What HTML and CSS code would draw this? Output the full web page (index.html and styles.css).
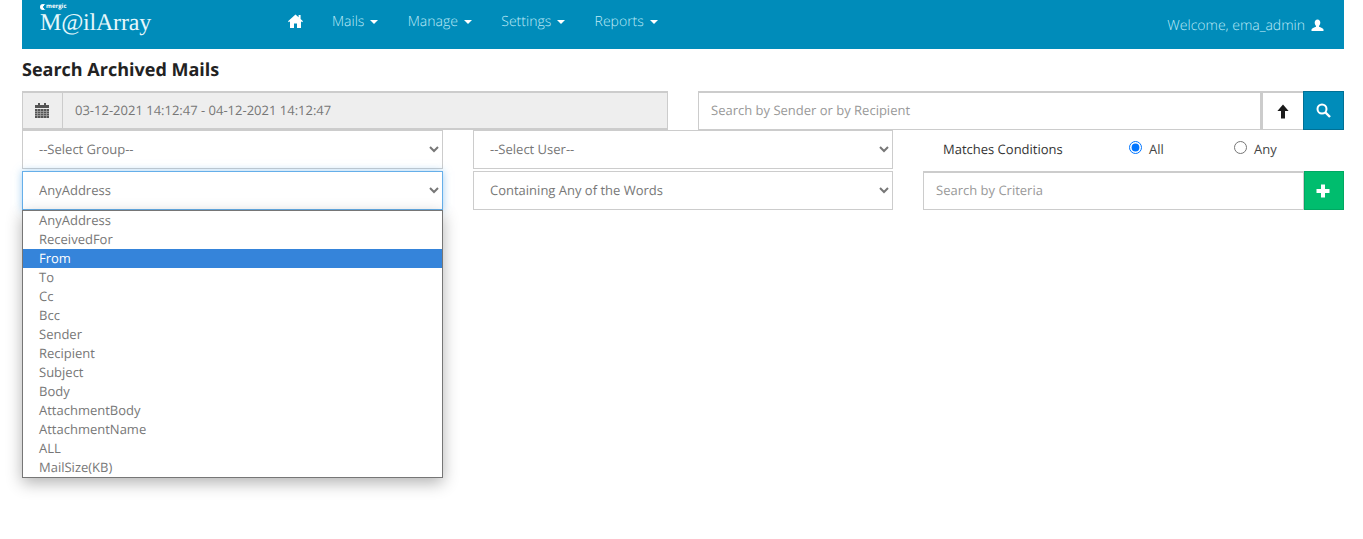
FILE: index.html
```html
<!DOCTYPE html>
<html lang="en">
<head>
<meta charset="utf-8">
<title>Search Archived Mails</title>
<link rel="stylesheet" href="styles.css">
</head>
<body>
<div class="page">
  <nav class="navbar">
    <div class="brand">
      <div class="brand-top"><span class="brand-dot"></span>mergic</div>
      <div class="brand-name">M@ilArray</div>
    </div>
    <ul class="menu">
      <li class="home"><svg width="15" height="14" viewBox="0 0 15 14"><path fill="#fff" d="M7.5 0.5 L0 7.3 L0.9 8.2 L2 7.3 V14 H6 V9.5 H9 V14 H13 V7.3 L14.1 8.2 L15 7.3 L12.6 5.1 V1 H10.6 V3.3 Z"/></svg></li>
      <li class="item">Mails<span class="caret"></span></li>
      <li class="item">Manage<span class="caret"></span></li>
      <li class="item">Settings<span class="caret"></span></li>
      <li class="item">Reports<span class="caret"></span></li>
    </ul>
    <div class="welcome">Welcome, ema_admin<svg class="user" width="13" height="13" viewBox="0 0 13 13"><path fill="#fff" d="M6.5 0.5 C4.7 0.5 3.7 1.9 3.7 3.6 C3.7 5 4.3 6.2 5 6.9 V7.7 C3.4 8.4 0.5 9.2 0.5 10.6 V12 H12.5 V10.6 C12.5 9.2 9.6 8.4 8 7.7 V6.9 C8.7 6.2 9.3 5 9.3 3.6 C9.3 1.9 8.3 0.5 6.5 0.5 Z"/></svg></div>
  </nav>
  <h1 class="title">Search Archived Mails</h1>
  <div class="row row-first">
    <div class="date-group">
      <span class="cal"><svg width="14" height="15" viewBox="0 0 14 15"><path fill="#555" d="M3 0 H5 V2 H9 V0 H11 V2 H14 V5 H0 V2 H3 Z M0 6 H14 V15 H0 Z"/><path stroke="#aaa" stroke-width="0.7" fill="none" d="M0 8.5 H14 M0 10.5 H14 M0 12.5 H14 M2.5 6 V15 M5.5 6 V15 M8.5 6 V15 M11.5 6 V15"/></svg></span>
      <input class="date-input" type="text" value="03-12-2021 14:12:47 - 04-12-2021 14:12:47" readonly>
    </div>
    <div class="search-group">
      <input class="search-input" type="text" placeholder="Search by Sender or by Recipient">
      <button class="btn-up" type="button"><svg width="12" height="15" viewBox="0 0 12 15"><path fill="#1a1a1a" d="M6 0.5 L11.6 7 H8 V14.5 H4 V7 H0.4 Z"/></svg></button>
      <button class="btn-search" type="button"><svg width="15" height="15" viewBox="0 0 15 15"><circle cx="6" cy="6" r="4.5" fill="none" stroke="#fff" stroke-width="2"/><path d="M9.5 9.5 L14 14" stroke="#fff" stroke-width="2.4"/></svg></button>
    </div>
  </div>
  <div class="row row-second">
    <select class="field"><option>--Select Group--</option></select>
    <select class="field"><option>--Select User--</option></select>
    <div class="conditions">
      <span class="cond-label">Matches Conditions</span>
      <label class="radio radio-all"><input type="radio" name="match" checked>All</label>
      <label class="radio"><input type="radio" name="match">Any</label>
    </div>
  </div>
  <div class="row row-third">
    <div class="select-wrap">
      <select class="field field-focus">
        <option>AnyAddress</option>
      </select>
      <ul class="dropdown">
        <li>AnyAddress</li>
        <li>ReceivedFor</li>
        <li class="active">From</li>
        <li>To</li>
        <li>Cc</li>
        <li>Bcc</li>
        <li>Sender</li>
        <li>Recipient</li>
        <li>Subject</li>
        <li>Body</li>
        <li>AttachmentBody</li>
        <li>AttachmentName</li>
        <li>ALL</li>
        <li>MailSize(KB)</li>
      </ul>
    </div>
    <select class="field"><option>Containing Any of the Words</option></select>
    <div class="criteria">
      <input class="criteria-input" type="text" placeholder="Search by Criteria">
      <button class="btn-add" type="button"><svg width="14" height="14" viewBox="0 0 14 14"><path fill="#fff" d="M5 0.5 H9 V5 H13.5 V9 H9 V13.5 H5 V9 H0.5 V5 H5 Z"/></svg></button>
    </div>
  </div>
</div>
</body>
</html>
```
FILE: styles.css
```css
* { box-sizing: border-box; text-rendering: geometricPrecision; }
html, body { margin: 0; padding: 0; background: #fff; }
body {
  font-family: "Open Sans", sans-serif;
  font-size: 13px;
  color: #555;
  height: 539px;
  overflow: hidden;
}
.page { padding: 0 19px 0 22px; }
.navbar {
  display: flex;
  align-items: flex-start;
  height: 49px;
  background: #008cba;
  color: #bfeaf7;
}
.brand { width: 259px; padding: 3px 0 0 18px; color: #e6f7fb; }
.brand-top {
  display: flex;
  align-items: center;
  font-weight: 700;
  font-size: 6px;
  line-height: 7px;
  color: #fff;
}
.brand-dot {
  width: 6px;
  height: 6px;
  border-radius: 50%;
  background: radial-gradient(circle at 85% 50%, #008cba 28%, #fff 30%);
}
.brand-name {
  font-family: "Liberation Serif", serif;
  font-size: 24px;
  line-height: 26px;
  letter-spacing: -0.2px;
}
.menu {
  display: flex;
  gap: 29.4px;
  list-style: none;
  margin: 0;
  padding: 12px 0 0;
  flex: 1;
  font-weight: 300;
  font-size: 14px;
  line-height: 19px;
}
.home { width: 21.6px; height: 19px; }
.home svg { display: block; margin: 2px 0 0 7px; }
.caret {
  display: inline-block;
  margin-left: 6px;
  vertical-align: middle;
  border-top: 4px solid #fff;
  border-left: 4px solid transparent;
  border-right: 4px solid transparent;
}
.welcome {
  display: flex;
  align-items: center;
  padding: 16px 20px 0 0;
  font-weight: 300;
  font-size: 14px;
  line-height: 19px;
}
.user { margin-left: 6px; }
.title {
  margin: 9px 0 9px;
  font-size: 18px;
  line-height: 24px;
  font-weight: 700;
  color: #222;
}
.row { display: flex; gap: 30px; }
.date-group {
  display: flex;
  width: 646px;
  height: 39px;
  flex: none;
  background: #eee;
  border: 1px solid #ccc;
  border-bottom-width: 2px;
  border-top-width: 2px;
}
.cal {
  display: flex;
  align-items: center;
  justify-content: center;
  width: 40px;
  flex: none;
  padding-right: 2px;
  border-right: 1px solid #ccc;
}
.date-input {
  flex: 1;
  min-width: 0;
  border: 0;
  background: transparent;
  padding: 0 12px 2px;
  font: inherit;
  color: #777;
  outline: none;
}
.search-group { display: flex; flex: 1; height: 39px; }
.search-input {
  flex: 1;
  min-width: 0;
  padding: 0 12px 2px;
  border: 1px solid #ccc;
  border-top-width: 2px;
  font: inherit;
  color: #555;
  outline: none;
}
.search-input::placeholder, .criteria-input::placeholder { color: #999; opacity: 1; }
.btn-up {
  display: flex;
  align-items: center;
  justify-content: center;
  width: 42px;
  padding: 0;
  background: #fff;
  border: 1px solid #ccc;
  border-left-width: 2px;
  border-right: 0;
  border-top-width: 2px;
}
.btn-search {
  display: flex;
  align-items: center;
  justify-content: center;
  width: 41px;
  padding: 0;
  background: #008cba;
  border: 1px solid #007095;
}
.field {
  width: 420px;
  height: 39px;
  flex: none;
  padding: 0 12px 2px;
  background: #fff;
  border: 1px solid #ccc;
  border-radius: 0;
  font: inherit;
  color: #777;
  outline: none;
}
.row-second > .field:first-child { width: 421px; }
.row-second { height: 41px; }
.conditions {
  display: flex;
  align-items: center;
  height: 39px;
  color: #333;
  padding-bottom: 2px;
}
.cond-label { width: 205px; padding-left: 20px; }
.radio {
  display: flex;
  align-items: center;
  gap: 7px;
  color: #444;
}
.radio input { margin: 0 0 2px; width: 13px; height: 13px; }
.radio-all { width: 105px; margin-left: 1px; }
.select-wrap { position: relative; width: 421px; flex: none; }
.select-wrap .field { width: 421px; }
.field-focus {
  border-color: #66afe9;
  box-shadow: 0 0 8px rgba(102, 175, 233, 0.6);
}
.dropdown {
  position: absolute;
  left: 0;
  right: 0;
  top: 39px;
  z-index: 5;
  margin: 0;
  padding: 0;
  list-style: none;
  height: 268px;
  background: #fff;
  border: 1px solid #767676;
  box-shadow: 0 5px 15px rgba(0, 0, 0, 0.3);
  color: #777;
}
.dropdown li {
  height: 19px;
  padding-left: 16px;
  line-height: 19px;
}
.dropdown .active { background: #3584da; color: #fff; }
.criteria { display: flex; flex: 1; height: 39px; }
.criteria-input {
  flex: 1;
  min-width: 0;
  padding: 0 12px 2px;
  border: 1px solid #ccc;
  border-top-width: 2px;
  font: inherit;
  outline: none;
}
.btn-add {
  display: flex;
  align-items: center;
  justify-content: center;
  width: 40px;
  padding: 0 2px 0 0;
  background: #00bd6e;
  border: 1px solid #00a862;
}
```
